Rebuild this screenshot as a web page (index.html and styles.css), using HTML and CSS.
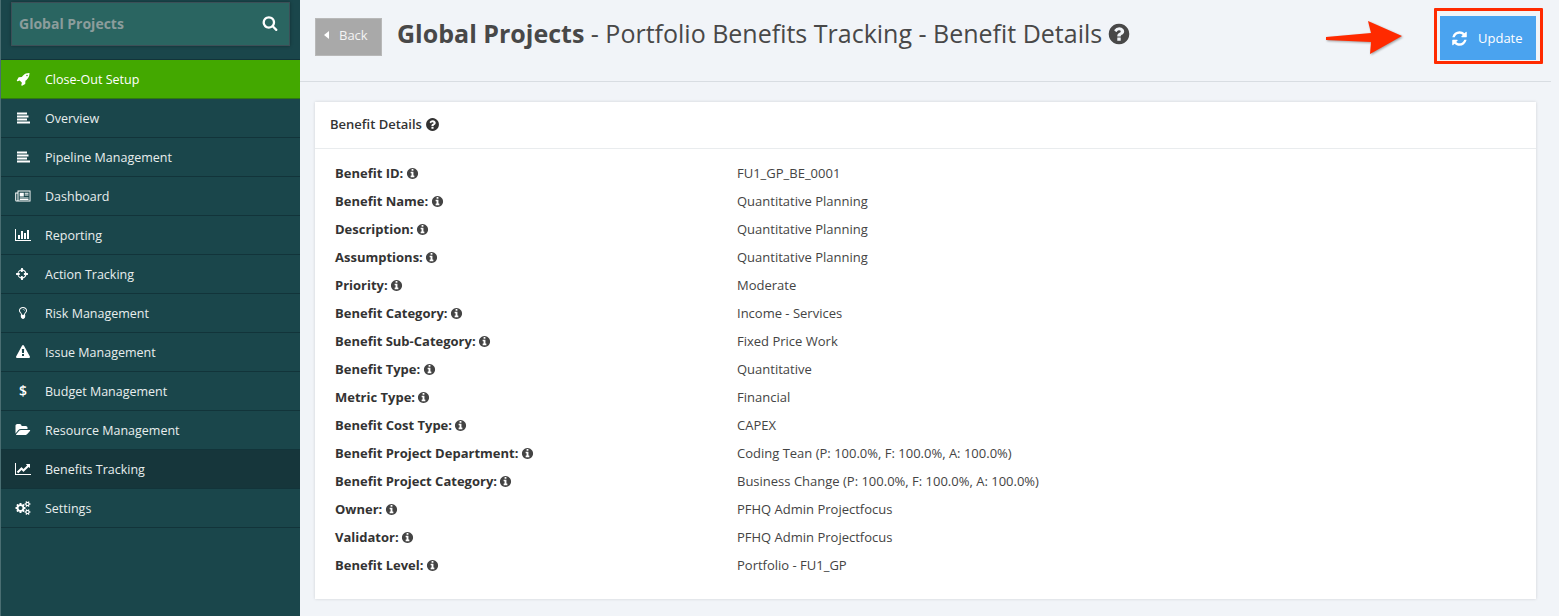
FILE: index.html
```html
<!DOCTYPE html>
<html lang="en">
<head>
<meta charset="utf-8">
<title>Benefit Details</title>
<link rel="stylesheet" href="styles.css">
</head>
<body>
<svg class="defs" aria-hidden="true">
  <symbol id="i-search" viewBox="0 0 1792 1792"><path d="M1216 832q0-185-131.500-316.500t-316.500-131.500-316.500 131.500-131.500 316.500 131.500 316.500 316.500 131.500 316.500-131.500 131.500-316.500zm512 832q0 52-38 90t-90 38q-54 0-90-38l-343-342q-179 124-399 124-143 0-273.500-55.500t-225-150-150-225-55.500-273.500 55.500-273.500 150-225 225-150 273.500-55.500 273.500 55.500 225 150 150 225 55.500 273.500q0 220-124 399l343 343q37 37 37 90z"/></symbol>
  <symbol id="i-q" viewBox="0 0 1792 1792"><path d="M1024 1376v-192q0-14-9-23t-23-9h-192q-14 0-23 9t-9 23v192q0 14 9 23t23 9h192q14 0 23-9t9-23zm256-672q0-88-55.500-163t-138.500-116-170-41q-243 0-371 213-15 24 8 42l132 100q7 6 19 6 16 0 25-12 53-68 86-92 34-24 86-24 48 0 85.500 26t37.500 59q0 38-20 61t-68 45q-63 28-115.500 86.500t-52.500 125.500v36q0 14 9 23t23 9h192q14 0 23-9t9-23q0-19 21.500-49.500t54.500-49.500q32-18 49-28.500t46-35 44.500-48 28-60.500 12.500-81zm384 192q0 209-103 385.500t-279.500 279.500-385.500 103-385.500-103-279.500-279.500-103-385.500 103-385.500 279.500-279.500 385.500-103 385.500 103 279.500 279.500 103 385.500z"/></symbol>
  <symbol id="i-info" viewBox="0 0 1792 1792"><path d="M1152 1376v-160q0-14-9-23t-23-9h-96v-512q0-14-9-23t-23-9h-320q-14 0-23 9t-9 23v160q0 14 9 23t23 9h96v320h-96q-14 0-23 9t-9 23v160q0 14 9 23t23 9h448q14 0 23-9t9-23zm-128-896v-160q0-14-9-23t-23-9h-192q-14 0-23 9t-9 23v160q0 14 9 23t23 9h192q14 0 23-9t9-23zm640 416q0 209-103 385.500t-279.500 279.500-385.500 103-385.500-103-279.500-279.500-103-385.500 103-385.500 279.500-279.500 385.500-103 385.500 103 279.500 279.500 103 385.500z"/></symbol>
  <symbol id="i-refresh" viewBox="0 0 1792 1792"><path d="M1639 1056q0 5-1 7-64 268-268 434.500t-478 166.500q-146 0-282.500-55t-243.500-157l-129 129q-19 19-45 19t-45-19-19-45v-448q0-26 19-45t45-19h448q26 0 45 19t19 45-19 45l-137 137q71 66 161 102t187 36q134 0 250-65t186-179q11-17 53-117 8-23 30-23h192q13 0 22.500 9.500t9.500 22.500zm25-800v448q0 26-19 45t-45 19h-448q-26 0-45-19t-19-45 19-45l138-138q-148-137-349-137-134 0-250 65t-186 179q-11 17-53 117-8 23-30 23h-199q-13 0-22.500-9.500t-9.500-22.500v-7q65-268 270-434.500t480-166.500q146 0 284 55.500t245 156.500l130-129q19-19 45-19t45 19 19 45z"/></symbol>
  <symbol id="i-rocket" viewBox="0 0 1792 1792"><path d="M1504 448q0-40-28-68t-68-28-68 28-28 68 28 68 68 28 68-28 28-68zm224-288q0 249-75.500 430.500t-253.500 360.500q-81 80-195 176l-20 379q-2 16-16 26l-384 224q-7 4-16 4-12 0-23-9l-64-64q-13-14-8-32l85-276-281-281-276 85q-3 1-9 1-14 0-23-9l-64-64q-17-19-5-39l224-384q10-14 26-16l379-20q96-114 176-195 188-187 358-258t431-71q14 0 24 9.500t10 22.500z"/></symbol>
  <symbol id="i-warn" viewBox="0 0 1792 1792"><path d="M1024 1375v-190q0-14-9.500-23.500t-22.500-9.500h-192q-13 0-22.500 9.500t-9.500 23.500v190q0 14 9.500 23.500t22.500 9.500h192q13 0 22.500-9.500t9.500-23.500zm-2-374l18-459q0-12-10-19-13-11-24-11h-220q-11 0-24 11-10 7-10 21l17 457q0 10 10 16.500t24 6.500h185q14 0 23.500-6.500t10.500-16.500zm-14-934l768 1408q35 63-2 126-17 29-46.500 46t-63.500 17h-1536q-34 0-63.500-17t-46.500-46q-37-63-2-126l768-1408q17-31 47-49t65-18 65 18 47 49z"/></symbol>
  <symbol id="i-lines" viewBox="0 0 14 14"><path d="M1 1.500h10v2H1zM1 4.600h11.500v1.900H1zM1 7.600h10v1.900H1zM1 10.600h13v2H1z"/></symbol>
  <symbol id="i-news" viewBox="0 0 16 14"><path fill-rule="evenodd" d="M2.500 1.500h13v11H1.500Q.2 12.500.2 11V3.500h2.300zM3.500 2.500v8.700q0 .4-.3.4h11.400V2.500zM1.200 4.500V11q0 .5.4.5t.9-.3V4.500zM4.700 3.700h4.100v3.800H4.700zM9.700 3.700h3.800v1H9.700zM9.700 5.500h3.800v1H9.700zM4.700 8.400h8.800v1H4.700zM4.700 10h8.800v.9H4.700z"/></symbol>
  <symbol id="i-bars" viewBox="0 0 2048 1792"><path d="M640 896v512h-256v-512h256zm384-512v1024h-256v-1024h256zm1024 1152v128h-2048v-1536h128v1408h1920zm-640-896v768h-256v-768h256zm384-384v1152h-256v-1152h256z"/></symbol>
  <symbol id="i-target" viewBox="0 0 1792 1792"><path d="M1173 1024h-109q-26 0-45-19t-19-45v-128q0-26 19-45t45-19h109q-32-108-112.500-188.500t-188.500-112.500v109q0 26-19 45t-45 19h-128q-26 0-45-19t-19-45v-109q-108 32-188.500 112.500t-112.500 188.500h109q26 0 45 19t19 45v128q0 26-19 45t-45 19h-109q32 108 112.500 188.500t188.500 112.500v-109q0-26 19-45t45-19h128q26 0 45 19t19 45v109q108-32 188.500-112.500t112.500-188.500zm363-192v128q0 26-19 45t-45 19h-143q-37 161-154.500 278.500t-278.500 154.500v143q0 26-19 45t-45 19h-128q-26 0-45-19t-19-45v-143q-161-37-278.500-154.500t-154.500-278.500h-143q-26 0-45-19t-19-45v-128q0-26 19-45t45-19h143q37-161 154.500-278.500t278.500-154.500v-143q0-26 19-45t45-19h128q26 0 45 19t19 45v143q161 37 278.500 154.500t154.500 278.500h143q26 0 45 19t19 45z"/></symbol>
  <symbol id="i-bulb" viewBox="0 0 1792 1792"><path d="M1120 576q0 13-9.500 22.500t-22.500 9.500-22.500-9.500-9.500-22.500q0-46-54-71t-106-25q-13 0-22.500-9.500t-9.500-22.500 9.500-22.500 22.500-9.500q50 0 99.500 16t87 54 37.500 90zm160 0q0-72-34.500-134t-90-101.500-123-62-136.500-22.500-136.500 22.500-123 62-90 101.500-34.500 134q0 101 68 180 10 11 30.500 33t30.500 33q128 153 141 298h228q13-145 141-298 10-11 30.500-33t30.500-33q68-79 68-180zm128 0q0 155-103 268-45 49-74.500 87t-59.500 95.500-34 107.500q47 28 47 82 0 37-25 64 25 27 25 64 0 52-45 81 13 23 13 47 0 46-31.500 71t-77.500 25q-20 44-60 70t-87 26-87-26-60-70q-46 0-77.500-25t-31.500-71q0-24 13-47-45-29-45-81 0-37 25-64-25-27-25-64 0-54 47-82-4-50-34-107.500t-59.500-95.500-74.500-87q-103-113-103-268 0-99 44.500-184.500t117-142 164-89 186.500-32.500 186.500 32.500 164 89 117 142 44.500 184.500z"/></symbol>
  <symbol id="i-folder" viewBox="0 0 2048 1792"><path d="M1943 952q0 31-31 66l-336 396q-43 51-120.500 86.500t-143.500 35.500h-1088q-34 0-60.500-13t-26.500-43q0-31 31-66l336-396q43-51 120.500-86.500t143.500-35.500h1088q34 0 60.500 13t26.500 43zm-343-344v160h-832q-94 0-197 47.500t-164 119.500l-337 396-5 6q0-4-.5-12.500t-.5-12.500v-960q0-92 66-158t158-66h320q92 0 158 66t66 158v32h544q92 0 158 66t66 158z"/></symbol>
  <symbol id="i-line" viewBox="0 0 2048 1792"><path d="M2048 1536v128h-2048v-1536h128v1408h1920zm-128-1248v435q0 21-19.500 29.500t-35.500-7.500l-121-121-633 633q-10 10-23 10t-23-10l-233-233-416 416-192-192 585-585q10-10 23-10t23 10l233 233 464-464-121-121q-16-16-7.500-35.500t29.500-19.500h435q14 0 23 9t9 23z"/></symbol>
  <symbol id="i-gears" viewBox="0 0 1920 1792"><path d="M896 896q0-106-75-181t-181-75-181 75-75 181 75 181 181 75 181-75 75-181zm768 512q0-52-38-90t-90-38-90 38-38 90q0 53 37.500 90.500t90.500 37.500 90.500-37.500 37.500-90.500zm0-1024q0-52-38-90t-90-38-90 38-38 90q0 53 37.500 90.500t90.500 37.500 90.500-37.500 37.500-90.500zm-384 421v185q0 10-7 19.500t-16 10.500l-155 24q-11 35-32 76 34 48 90 115 7 11 7 20 0 12-7 19-23 30-82.500 89.500t-78.500 59.500q-11 0-21-7l-115-90q-37 19-77 31-11 108-23 155-7 24-30 24h-186q-11 0-20-7.500t-10-17.500l-23-153q-34-10-75-31l-118 89q-7 7-20 7-11 0-21-8-144-133-144-160 0-9 7-19 10-14 41-53t47-61q-23-44-35-82l-152-24q-10-1-17-9.500t-7-19.500v-185q0-10 7-19.500t16-10.500l155-24q11-35 32-76-34-48-90-115-7-11-7-20 0-12 7-20 22-30 82-89t79-59q11 0 21 7l115 90q34-18 77-32 11-108 23-154 7-24 30-24h186q11 0 20 7.500t10 17.500l23 153q34 10 75 31l118-89q8-7 20-7 11 0 21 8 144 133 144 160 0 8-7 19-12 16-42 54t-45 60q23 48 34 82l152 23q10 2 17 10.500t7 19.500zm640 533v140q0 16-149 31-12 27-30 52 51 113 51 138 0 4-4 7-122 71-124 71-8 0-46-47t-52-68q-20 2-30 2t-30-2q-14 21-52 68t-46 47q-2 0-124-71-4-3-4-7 0-25 51-138-18-25-30-52-149-15-149-31v-140q0-16 149-31 13-29 30-52-51-113-51-138 0-4 4-7 4-2 35-20t59-34 30-16q8 0 46 46.500t52 67.500q20-2 30-2t30 2q51-71 92-112l6-2q4 0 124 70 4 3 4 7 0 25-51 138 17 23 30 52 149 15 149 31zm0-1024v140q0 16-149 31-12 27-30 52 51 113 51 138 0 4-4 7-122 71-124 71-8 0-46-47t-52-68q-20 2-30 2t-30-2q-14 21-52 68t-46 47q-2 0-124-71-4-3-4-7 0-25 51-138-18-25-30-52-149-15-149-31v-140q0-16 149-31 13-29 30-52-51-113-51-138 0-4 4-7 4-2 35-20t59-34 30-16q8 0 46 46.500t52 67.500q20-2 30-2t30 2q51-71 92-112l6-2q4 0 124 70 4 3 4 7 0 25-51 138 17 23 30 52 149 15 149 31z"/></symbol>
</svg>

<div class="app">
  <aside class="sidebar">
    <div class="search-wrap">
      <div class="search">
        <span class="search-text">Global Projects</span>
        <svg class="search-icon"><use href="#i-search"/></svg>
      </div>
    </div>
    <nav class="menu">
      <a class="item active"><span class="ico"><svg class="ic14"><use href="#i-rocket"/></svg></span>Close-Out Setup</a>
      <a class="item"><span class="ico"><svg class="ic14"><use href="#i-lines"/></svg></span>Overview</a>
      <a class="item"><span class="ico"><svg class="ic14"><use href="#i-lines"/></svg></span>Pipeline Management</a>
      <a class="item"><span class="ico"><svg class="ic16"><use href="#i-news"/></svg></span>Dashboard</a>
      <a class="item"><span class="ico"><svg class="ic16"><use href="#i-bars"/></svg></span>Reporting</a>
      <a class="item"><span class="ico"><svg class="ic14"><use href="#i-target"/></svg></span>Action Tracking</a>
      <a class="item"><span class="ico"><svg class="ic14"><use href="#i-bulb"/></svg></span>Risk Management</a>
      <a class="item"><span class="ico"><svg class="ic14"><use href="#i-warn"/></svg></span>Issue Management</a>
      <a class="item"><span class="ico dollar">$</span>Budget Management</a>
      <a class="item"><span class="ico"><svg class="ic16"><use href="#i-folder"/></svg></span>Resource Management</a>
      <a class="item current"><span class="ico"><svg class="ic16"><use href="#i-line"/></svg></span>Benefits Tracking</a>
      <a class="item"><span class="ico"><svg class="ic16"><use href="#i-gears"/></svg></span>Settings</a>
    </nav>
  </aside>

  <main class="main">
    <header class="topbar">
      <a class="back"><span class="caret"></span>Back</a>
      <h1 class="title"><b>Global Projects</b> - Portfolio Benefits Tracking - Benefit Details <svg class="title-q"><use href="#i-q"/></svg></h1>
      <a class="update"><svg class="update-ico"><use href="#i-refresh"/></svg>Update</a>
    </header>

    <section class="card">
      <div class="card-head">Benefit Details <svg class="head-q"><use href="#i-q"/></svg></div>
      <dl class="rows">
        <dt>Benefit ID: <svg class="info"><use href="#i-info"/></svg></dt><dd>FU1_GP_BE_0001</dd>
        <dt>Benefit Name: <svg class="info"><use href="#i-info"/></svg></dt><dd>Quantitative Planning</dd>
        <dt>Description: <svg class="info"><use href="#i-info"/></svg></dt><dd>Quantitative Planning</dd>
        <dt>Assumptions: <svg class="info"><use href="#i-info"/></svg></dt><dd>Quantitative Planning</dd>
        <dt>Priority: <svg class="info"><use href="#i-info"/></svg></dt><dd>Moderate</dd>
        <dt>Benefit Category: <svg class="info"><use href="#i-info"/></svg></dt><dd>Income - Services</dd>
        <dt>Benefit Sub-Category: <svg class="info"><use href="#i-info"/></svg></dt><dd>Fixed Price Work</dd>
        <dt>Benefit Type: <svg class="info"><use href="#i-info"/></svg></dt><dd>Quantitative</dd>
        <dt>Metric Type: <svg class="info"><use href="#i-info"/></svg></dt><dd>Financial</dd>
        <dt>Benefit Cost Type: <svg class="info"><use href="#i-info"/></svg></dt><dd>CAPEX</dd>
        <dt>Benefit Project Department: <svg class="info"><use href="#i-info"/></svg></dt><dd>Coding Tean (P: 100.0%, F: 100.0%, A: 100.0%)</dd>
        <dt>Benefit Project Category: <svg class="info"><use href="#i-info"/></svg></dt><dd>Business Change (P: 100.0%, F: 100.0%, A: 100.0%)</dd>
        <dt>Owner: <svg class="info"><use href="#i-info"/></svg></dt><dd>PFHQ Admin Projectfocus</dd>
        <dt>Validator: <svg class="info"><use href="#i-info"/></svg></dt><dd>PFHQ Admin Projectfocus</dd>
        <dt>Benefit Level: <svg class="info"><use href="#i-info"/></svg></dt><dd>Portfolio - FU1_GP</dd>
      </dl>
    </section>
  </main>
</div>

<div class="annot-box"></div>
<svg class="annot-arrow" viewBox="0 0 80 36"><polygon points="1,17 46,13 43,1 77,16 45,34 46,22 1,20"/></svg>
</body>
</html>
```
FILE: styles.css
```css
* { box-sizing: border-box; }
html, body { margin: 0; height: 100%; overflow: hidden; }
body {
  font-family: "Open Sans", sans-serif;
  font-size: 13px;
  color: #444;
  background: #f1f4f8;
}
.defs { position: absolute; width: 0; height: 0; }
svg { fill: currentColor; display: inline-block; }
.app { display: flex; height: 616px; }

/* Sidebar */
.sidebar {
  width: 300px;
  flex: none;
  background: #1a464b;
  border-left: 1px solid #4a6e72;
  display: flex;
  flex-direction: column;
}
.search-wrap { height: 60px; padding: 2px 10px 0; border-bottom: 1px solid #12343a; }
.search {
  height: 44px;
  display: flex;
  align-items: center;
  justify-content: space-between;
  padding: 0 11px 2px 7px;
  background: #2a6561;
  border: 1px solid #3c4f57;
  box-shadow: 0 0 3px rgba(0,0,0,.35);
}
.search-text { font-size: 14px; font-weight: 700; color: #8c9d9c; }
.search-icon { width: 16px; height: 16px; color: #fff; }
.menu { display: flex; flex-direction: column; }
.item {
  height: 39px;
  display: flex;
  align-items: center;
  font-size: 12.5px;
  color: #e8eeee;
  border-bottom: 1px solid #12343a;
}
.item.active { background: #43a800; color: #fff; border-bottom-color: #2f7a10; }
.item.current { background: #16363b; }
.ico { width: 44px; display: flex; justify-content: center; color: #fff; flex: none; }
.ic14 { width: 14px; height: 14px; }
.ic16 { width: 16px; height: 14px; }
.dollar { font-weight: 600; font-size: 14px; line-height: 14px; }

/* Main */
.main { flex: 1; min-width: 0; padding-right: 23px; }
.topbar {
  height: 82px;
  margin-right: -15px;
  display: flex;
  align-items: flex-start;
  padding: 18px 0 0 15px;
  border-bottom: 1px solid #d8dde2;
}
.back {
  width: 67px;
  height: 38px;
  display: flex;
  align-items: center;
  background: #a9a9a9;
  border: 1px solid #b8b8b8;
  color: #f4f4f4;
  font-size: 13px;
  padding: 0 0 5px 8px;
}
.caret {
  width: 0;
  height: 0;
  border-style: solid;
  border-width: 4px 5px 4px 0;
  border-color: transparent #fff transparent transparent;
  margin-right: 10px;
}
.title { margin: -1px 0 0 15px; font-size: 25px; font-weight: 400; line-height: 33px; color: #484848; white-space: nowrap; flex: 1; }
.title b { font-weight: 700; }
.title-q { width: 24px; height: 24px; vertical-align: -3px; margin-left: -2px; }
.update {
  width: 96px;
  height: 44px;
  margin: -2px 15px 0 0;
  display: flex;
  align-items: center;
  background: #4aa3ef;
  color: #fff;
  font-size: 13px;
  padding-left: 11px;
}
.update-ico { width: 17px; height: 17px; margin-right: 10px; }

/* Card */
.card {
  margin: 20px 0 0 15px;
  height: 497px;
  background: #fff;
  box-shadow: 0 0 3px rgba(0,0,0,.14);
}
.card-head {
  height: 47px;
  padding: 0 15px 2px;
  display: flex;
  align-items: center;
  gap: 3px;
  font-weight: 600;
  color: #333;
  border-bottom: 1px solid #e9ecee;
}
.head-q { width: 15px; height: 15px; }
.rows {
  margin: 0;
  padding: 10px 20px 0;
  display: grid;
  grid-template-columns: 402px 1fr;
  grid-auto-rows: 28px;
  align-items: center;
}
dt { font-weight: 700; color: #333; white-space: nowrap; }
dd { margin: 0; color: #444; white-space: nowrap; }
.info { width: 13px; height: 13px; vertical-align: -2px; margin-left: -1px; color: #444; }

/* Annotations over the page */
.annot-box {
  position: absolute;
  left: 1434px;
  top: 8px;
  width: 109px;
  height: 56px;
  border: 3px solid #ff2a00;
  border-radius: 1px;
}
.annot-arrow {
  position: absolute;
  left: 1325px;
  top: 20px;
  width: 80px;
  height: 36px;
  fill: #ff2a00;
  filter: drop-shadow(1px 1px 1px rgba(0,0,0,.35));
}
```
